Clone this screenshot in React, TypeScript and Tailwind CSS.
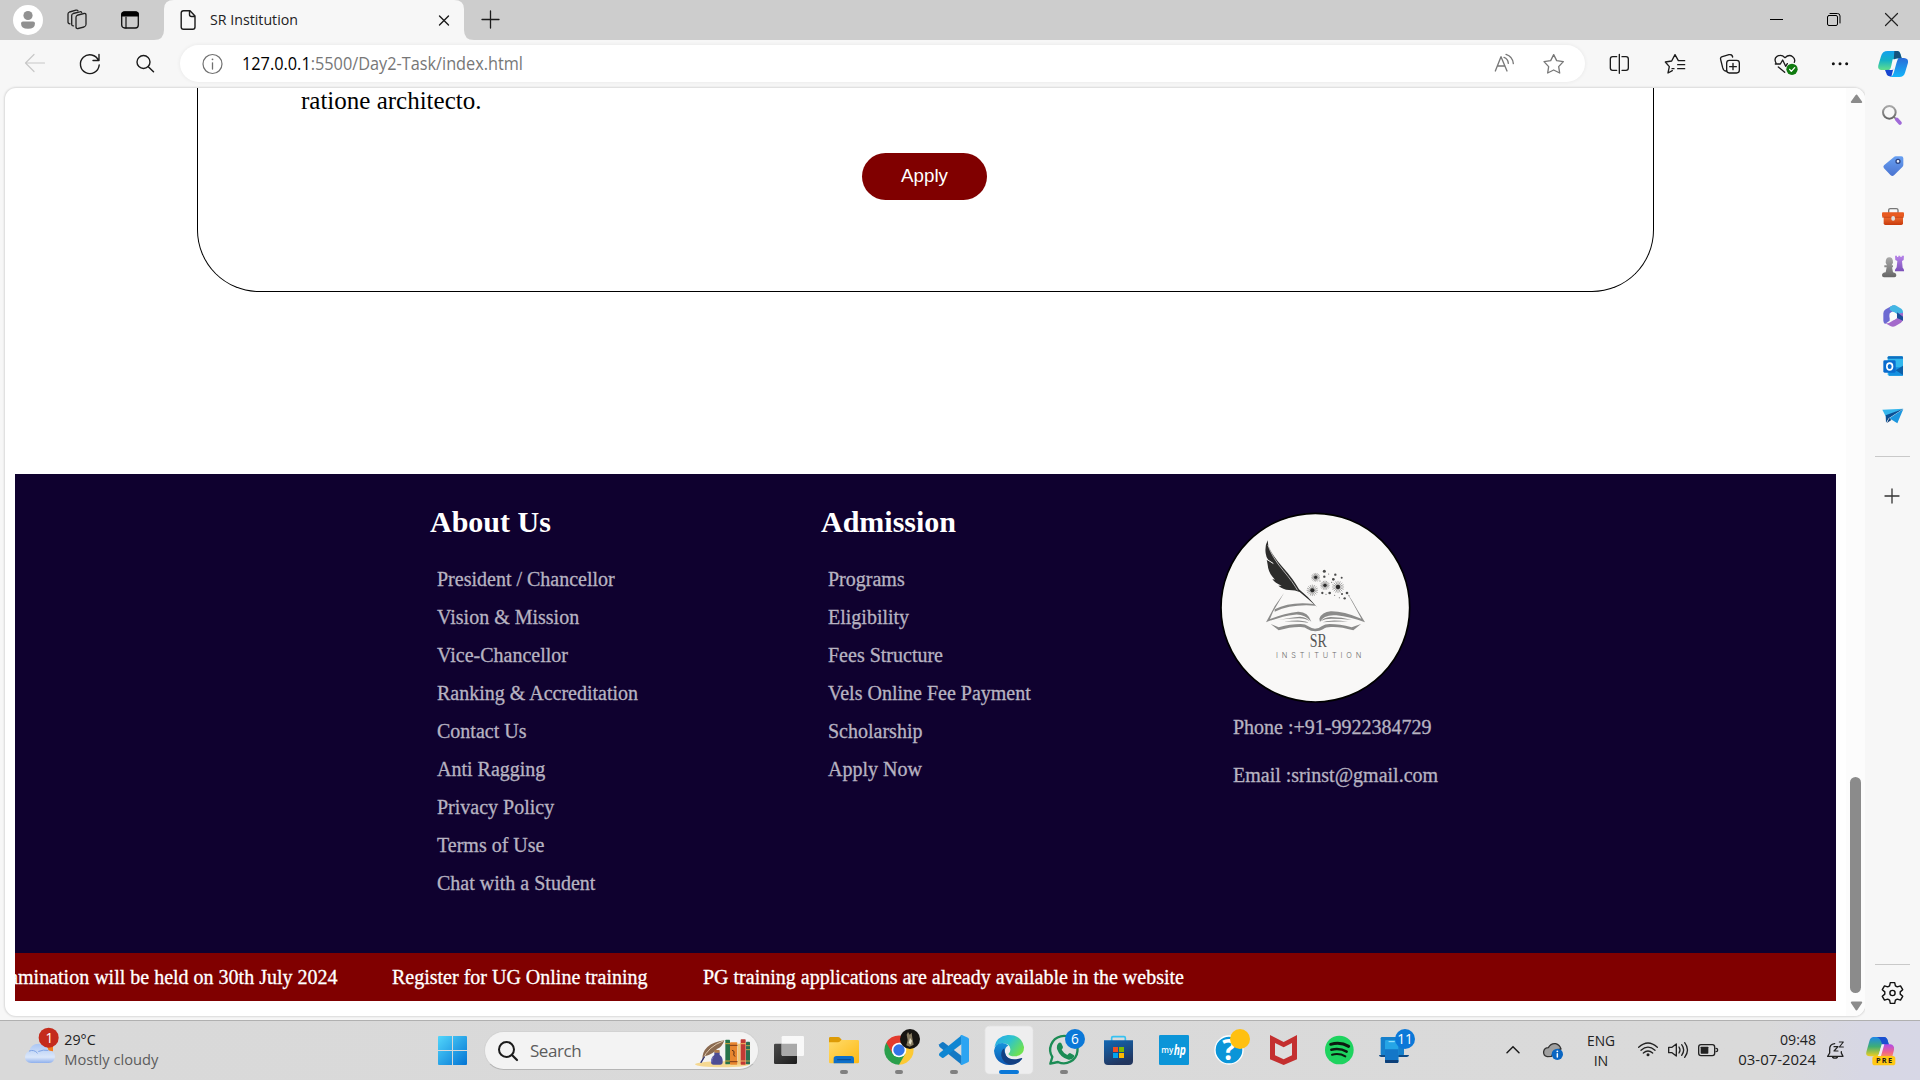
import React from "react";

type Vb = { w: number; h: number; vb?: string; className?: string; children: React.ReactNode };

function Svg({ w, h, vb, className, children }: Vb) {
  return (
    <svg
      width={w}
      height={h}
      viewBox={vb ?? `0 0 ${w} ${h}`}
      fill="none"
      strokeLinecap="round"
      strokeLinejoin="round"
      className={className ?? "block shrink-0"}
    >
      {children}
    </svg>
  );
}

const ui = "font-['Open_Sans','Noto_Sans',sans-serif]";
const serif = "font-['Liberation_Serif',serif]";
const sans = "'Open Sans','Noto Sans',sans-serif";

function TabStrip() {
  return (
    <div className="flex h-10 w-full items-stretch bg-[#cdcdcd]">
      <div className="flex w-[154px] items-center pl-[13px]">
        <Svg w={30} h={30}>
          <circle cx="15" cy="15" r="15" fill="#fff" />
          <circle cx="15" cy="10.500" r="4.600" fill="#919191" />
          <path d="M10 16.500h10q2 0 2 2 0 5.300-7 5.300t-7-5.300q0-2 2-2z" fill="#919191" />
        </Svg>
        <Svg w={24} h={24} className="ml-[22px] block">
          <g stroke="#222" strokeWidth="1.300">
            <rect x="0" y="0" width="10" height="13.500" rx="2" transform="translate(11 7.500) skewY(-14)" />
            <path d="M8.500 17.800c-1 .2-1.800-.5-1.800-1.500V7.500c0-1 .6-1.700 1.500-2l6.500-1.700c1-.3 1.700.1 2 .8" />
            <path d="M5 15.800c-1.200 0-2-.7-2-1.700V6c0-1 .6-1.700 1.500-2L11 2.200c.9-.2 1.600 0 2 .6" />
          </g>
        </Svg>
        <Svg w={20} h={20} className="ml-[31px] block">
          <rect x="1.700" y="2" width="16.600" height="16" rx="3" stroke="#111" strokeWidth="1.300" />
          <path d="M1.200 6.500V4.200Q1.200 1.400 4 1.400h12q2.800 0 2.800 2.800v2.300z" fill="#000" />
          <path d="M6 7v11" stroke="#111" strokeWidth="1.200" />
        </Svg>
      </div>
      <Svg w={320} h={40}>
        <path d="M0 40Q10 40 10 30V9Q10 0 20 0H300Q310 0 310 9V30Q310 40 320 40Z" fill="#f7f7f7" />
        <g stroke="#1b1b1b" strokeWidth="1.400">
          <path d="M29.500 10.700h6.500l5 5.300v11q0 2.300-2.300 2.300h-9.200q-2.300 0-2.300-2.300V13q0-2.300 2.300-2.300zM35.500 11v3.500q0 2 2 2H41" />
          <path d="M285.500 16l9 9m0-9l-9 9" />
        </g>
        <text x="56" y="24.800" fontFamily={sans} fontSize="14.500" fill="#222" textLength="88" lengthAdjust="spacingAndGlyphs">
          SR Institution
        </text>
      </Svg>
      <Svg w={32} h={40}>
        <path d="M8 19.500h17M16.500 11v17" stroke="#1b1b1b" strokeWidth="1.300" />
      </Svg>
      <div className="ml-auto flex">
        <Svg w={57} h={40}>
          <path d="M22 19.500h13" stroke="#000" strokeLinecap="butt" />
        </Svg>
        <Svg w={57} h={40}>
          <rect x="22.500" y="15.500" width="10" height="10" rx="1.500" stroke="#000" />
          <path d="M25 13.500h7.500q2.500 0 2.500 2.500v7" stroke="#000" />
        </Svg>
        <Svg w={58} h={40}>
          <path d="M23.500 13.500l12 12m0-12l-12 12" stroke="#222" strokeWidth="1.200" />
        </Svg>
      </div>
    </div>
  );
}

function Toolbar() {
  return (
    <div className="flex h-12 w-full items-center bg-[#f7f7f7]">
      <Svg w={180} h={48}>
        <path d="M44.500 23H25.500m8.500-8.500L25.500 23l8.500 8.500" stroke="#c8c8c8" strokeWidth="1.200" />
        <path d="M98.500 20.500A9.400 9.400 0 1 0 99.200 25M99 14.500v6h-6" stroke="#1b1b1b" strokeWidth="1.400" />
        <circle cx="143.500" cy="22" r="6.500" stroke="#1b1b1b" strokeWidth="1.400" />
        <path d="M148.300 26.800l5.200 5" stroke="#1b1b1b" strokeWidth="1.500" />
      </Svg>
      <div className="mb-[1px] flex h-[37px] w-[1405px] items-center rounded-full bg-white shadow-[0_0_4px_rgba(0,0,0,0.07)]">
        <Svg w={62} h={37}>
          <circle cx="32.500" cy="19" r="9.500" stroke="#707070" strokeWidth="1.200" />
          <path d="M32.500 17.800v6.200" stroke="#707070" strokeWidth="1.300" />
          <circle cx="32.500" cy="14.300" r=".9" fill="#707070" />
        </Svg>
        <Svg w={290} h={37}>
          <text x="0" y="25" fontFamily={sans} fontSize="17.300" fill="#777" textLength="281" lengthAdjust="spacingAndGlyphs">
            <tspan fill="#000">127.0.0.1</tspan>:5500/Day2-Task/index.html
          </text>
        </Svg>
        <Svg w={100} h={37} vb="135 135 300 111" className="ml-auto block">
          <g stroke="#777" strokeWidth="4">
            <path d="M166 213l17-43 18 43M172 198h23M192 172q12 4 13 18M198 163q20 6 22 28" />
            <path d="M341 164l9 18 20 3-14 15 3 19-18-9-18 9 3-19-14-15 20-3z" />
          </g>
        </Svg>
      </div>
      <Svg w={335} h={48} vb="435 120 1005 144">
        <g stroke="#1b1b1b" strokeWidth="4">
          <path d="M530 170h-12q-7 0-7 7v27q0 7 7 7h12M546 170h12q7 0 7 7v27q0 7-7 7h-12M538 163v57" />
          <path d="M697 212l-13 7 4-19-12-14 19-3 10-19 10 18h19M713 194h21M713 206h21M702 206h-6" />
          <path d="M860 213h-4q-5 0-8-10l-6-24q-2-7 5-9l20-6q9-2 11 7" />
          <rect x="860" y="181" width="38" height="38" rx="8" />
          <path d="M879 190v19M869 200h20" />
          <path d="M1008 189q-7-14 3-20 13-7 24 4 12-11 23-3 9 7 5 17M1006 192h15l7-12 9 19 5-8M1015 201l19 16" />
        </g>
        <circle cx="1056" cy="208" r="17" fill="#0f7b0f" />
        <path d="M1049 208l5 6 10-11" stroke="#fff" strokeWidth="4" />
        <g fill="#111">
          <circle cx="1180" cy="191" r="4.500" />
          <circle cx="1200" cy="191" r="4.500" />
          <circle cx="1220" cy="191" r="4.500" />
        </g>
        <defs>
          <linearGradient id="cpA" x1="0" y1="0" x2="0" y2="1">
            <stop offset="0" stopColor="#13a0ee" />
            <stop offset=".5" stopColor="#16b2c5" />
            <stop offset="1" stopColor="#62e08b" />
          </linearGradient>
          <linearGradient id="cpB" x1="0" y1="0" x2="0" y2="1">
            <stop offset="0" stopColor="#2a6cd8" />
            <stop offset="1" stopColor="#14b5fa" />
          </linearGradient>
        </defs>
        <path d="M1343 153h29q7 0 9 8l4 13-20 2-14 34h-28q-11-1-8-14l8-27q4-16 20-16z" fill="url(#cpA)" />
        <path d="M1363 153h10q6 0 8 8l4 14h-14q-7 0-10 8z" fill="#16527c" />
        <path d="M1335 210l17-1 8-3-6 24q-13 0-15-10z" fill="#1746d0" />
        <path d="M1376 174h16q14 1 12 14l-9 30q-4 13-17 13h-28q8-2 11-12l9-32q3-11 6-13z" fill="url(#cpB)" />
        <path d="M1358 178h10l-10 32h-11q4 0 6-9z" fill="#f7f7f7" />
      </Svg>
    </div>
  );
}

const about = [
  "President / Chancellor",
  "Vision & Mission",
  "Vice-Chancellor",
  "Ranking & Accreditation",
  "Contact Us",
  "Anti Ragging",
  "Privacy Policy",
  "Terms of Use",
  "Chat with a Student",
];
const admission = ["Programs", "Eligibility", "Fees Structure", "Vels Online Fee Payment", "Scholarship", "Apply Now"];

function LinkColumn({ title, items }: { title: string; items: string[] }) {
  return (
    <div className="w-[391px]">
      <h2 className="text-[30px] leading-[34px] font-bold text-white">{title}</h2>
      <ul className="mt-[20.5px] ml-[7px] text-[20px] leading-[38px] text-[#b7b3c1] [-webkit-text-stroke:0.3px_#b7b3c1]">
        {items.map((t) => (
          <li key={t}>{t}</li>
        ))}
      </ul>
    </div>
  );
}

const bursts: [number, number, number][] = [
  [347, 261, 12],
  [375, 285, 13],
  [337, 300, 16],
  [414, 290, 17],
];
const dots: [number, number, number][] = [
  [373, 243, 4.5], [406, 253, 3.5], [425, 262, 3], [373, 259, 3.5], [400, 267, 4], [367, 308, 3.5],
  [389, 308, 4], [441, 308, 4], [434, 324, 3.5], [426, 311, 3], [386, 251, 1.5], [395, 276, 1.5],
  [360, 272, 1.5], [418, 322, 1.5], [404, 315, 1.5], [378, 312, 1.5], [447, 316, 1.5],
];
const angles = [0, 22.5, 45, 67.5, 90, 112.5, 135, 157.5];

function InstitutionLogo() {
  return (
    <Svg w={191} h={191} vb="60 65 573 573">
      <circle cx="346" cy="352" r="283" fill="#f9f8f7" stroke="#000" strokeWidth="5" />
      <path d="M203 150q0 14 6 25 10 22 38 54 34 38 50 68 28 22 54 53-26-24-52-45-12-6-32-6-18-1-32-13l10 0q-20-8-28-20l8 2q-20-20-22-45-1-7-3-15l6 3q-8-10-9-22-3-22 6-39z" fill="#2c2c2b" />
      <path d="M204 165q12 36 46 76 30 36 42 58" stroke="#f9f8f7" strokeWidth="2" />
      <path d="M199 206l20 13" stroke="#f9f8f7" strokeWidth="3" />
      {bursts.map(([x, y, r], i) => (
        <g key={i} transform={`translate(${x} ${y})`} stroke="#444" strokeWidth="1.200">
          {angles.map((a) => (
            <path key={a} d={`M${-r} 0H${r}`} transform={`rotate(${a})`} />
          ))}
          <circle r={r * 0.38} fill="#2a2a2a" stroke="none" />
        </g>
      ))}
      {dots.map(([x, y, r], i) => (
        <circle key={i} cx={x} cy={y} r={r} fill="#4a4a4a" />
      ))}
      <g fill="#8b8b8a">
        <path d="M252 308l-33 56-9 22q45-18 84-22 30-1 40 30-22-24-50-21-38 4-86 23l26-48z" />
        <path d="M224 357q46-24 118-16l4 5q-70-6-122 18z" />
        <path d="M440 306q18 26 32 52l23 38q-44-16-86-21-38-3-49 20l-2-10q8-20 34-22 36-1 92 22l-22-40z" />
        <path d="M232 389q40-8 68-10 22 2 29 14-12-9-32-9-28 0-65 5z" />
        <path d="M252 394q30-4 50-3 16 1 26 6-36-4-76-3z" />
        <path d="M456 389q-30-9-64-9-20 2-30 12 14-7 32-7 30 0 62 4z" />
        <path d="M444 394q-28-4-50-3-16 1-26 5 36-3 76-2z" />
        <path d="M212 401l24 10q35-10 66-10 14 0 23 7 10 7 20 7 12 0 20-7 10-7 24-7 30 0 66 10l28-10-23 19q-40-12-67-10-16 0-24 7-10 6-23 6-14 0-24-7-6-6-20-6-30-1-66 10z" />
      </g>
      <text x="329" y="469" fontFamily="'Liberation Serif',serif" fontSize="55" fill="#555" textLength="51" lengthAdjust="spacingAndGlyphs">
        SR
      </text>
      <text x="228" y="502" fontFamily="Inter,sans-serif" fontSize="22" fontWeight="300" fill="#6a6a6a" textLength="256">
        INSTITUTION
      </text>
    </Svg>
  );
}

function Page() {
  return (
    <div className={`flex min-w-0 flex-1 flex-col pr-[10px] pl-[10px] ${serif}`}>
      <section className="ml-[182px] flex h-[204px] w-[1457px] flex-col rounded-b-[62px] border border-t-0 border-black">
        <p className="pl-[103px] text-[25px] leading-[26px] text-black">ratione architecto.</p>
        <button className="mt-[39px] ml-[664px] h-[47px] w-[125px] rounded-full bg-[#800000] font-['Liberation_Sans',sans-serif] text-[18.75px] text-white">
          Apply
        </button>
      </section>
      <footer className="mt-[182px] flex h-[479px] w-[1821px] bg-[#0f012f] pt-[31px] pl-[415px]">
        <LinkColumn title="About Us" items={about} />
        <LinkColumn title="Admission" items={admission} />
        <div className="mt-[7px] ml-[8px] w-[240px]">
          <InstitutionLogo />
          <div className="pl-[13px] text-[20px] leading-[48px] whitespace-nowrap text-[#b7b3c1] [-webkit-text-stroke:0.3px_#b7b3c1]">
            <p>Phone :+91-9922384729</p>
            <p>Email :srinst@gmail.com</p>
          </div>
        </div>
      </footer>
      <div className="flex h-12 w-[1821px] overflow-hidden bg-[#800000] text-[20px] leading-[48px] whitespace-nowrap text-white [-webkit-text-stroke:0.3px_white]">
        <div className="flex w-[322.5px] shrink-0 justify-end">
          <span>Entrance Examination will be held on 30th July 2024</span>
        </div>
        <span className="w-[311px] shrink-0 pl-[54.5px]">Register for UG Online training</span>
        <span className="pl-[54.5px]">PG training applications are already available in the website</span>
      </div>
    </div>
  );
}

function Scrollbar() {
  return (
    <div className="flex w-[19px] flex-col items-center bg-[#fcfcfc]">
      <Svg w={14} h={17}>
        <path d="M7.500 7.500L12.200 14H2.800z" fill="#8b8b8b" stroke="#8b8b8b" strokeWidth="2" />
      </Svg>
      <div className="mt-[672px] h-[216px] w-[11px] rounded-full bg-[#8b8b8b]" />
      <Svg w={14} h={20}>
        <path d="M7.500 16.500L2.800 9.500h9.400z" fill="#8b8b8b" stroke="#8b8b8b" strokeWidth="2" />
      </Svg>
    </div>
  );
}

function Sidebar() {
  return (
    <aside className="flex w-[55px] flex-col bg-[#f7f7f7] pt-[2px]">
      <Svg w={55} h={350} vb="135 30 165 1050">
        <defs>
          <linearGradient id="sg" x1="0" y1="0" x2="0" y2="1"><stop stopColor="#a9a9a9" /><stop offset="1" stopColor="#666" /></linearGradient>
          <linearGradient id="sp" x1="0" y1="0" x2="0" y2="1"><stop stopColor="#b884ea" /><stop offset="1" stopColor="#7a50b8" /></linearGradient>
          <linearGradient id="sb" x1="0" y1="0" x2="0" y2="1"><stop stopColor="#68a0f2" /><stop offset="1" stopColor="#4a73d0" /></linearGradient>
          <linearGradient id="so" x1="0" y1="0" x2="0" y2="1"><stop stopColor="#ee6c30" /><stop offset="1" stopColor="#c83a0c" /></linearGradient>
        </defs>
        <circle cx="208" cy="97" r="19" stroke="url(#sg)" strokeWidth="6" />
        <path d="M222 111l6 6" stroke="#777" strokeWidth="5" />
        <path d="M230 118l10 11" stroke="#a06ad8" strokeWidth="11" />
        <path d="M222 231q2-2 5-2h17q6 0 6 6v19q0 4-3 7l-25 25q-5 4-10 0l-20-21q-4-5 0-9z" fill="url(#sb)" />
        <circle cx="234" cy="244" r="6" fill="#e8f0ff" stroke="#2d4480" strokeWidth="4" />
        <path d="M206 398v-8q0-4 5-4h18q5 0 5 4v8" stroke="#777" strokeWidth="4" />
        <path d="M191 411h58v19q0 5-5 5h-48q-5 0-5-5z" fill="url(#so)" />
        <rect x="186" y="397" width="66" height="14" rx="3" fill="#e85a20" />
        <path d="M188 412h62" stroke="#b93a10" strokeWidth="2" />
        <rect x="214" y="408" width="11" height="14" rx="5" fill="#ddd" />
        <g fill="url(#sg)">
          <path d="M197 548q0-16 11-16t11 16l-4 8h4v6h-3l3 15q10 2 10 9 0 6-6 6h-31q-6 0-6-6 0-8 11-9l3-15h-7v-6h8z" />
        </g>
        <path d="M225 527h6v4h4v-4h6v4h4v-4h7l-1 13-5 3 2 20q4 3 4 8v3h-27v-5l5-7 2-19-6-3z" fill="url(#sp)" />
        <path d="M219 676l-22 12q-7 4-7 12v22q0 6 5 10l14-10v-22l22-14z" fill="#6d6ad2" />
        <path d="M219 676q5-2 10 1l15 9q5 4 5 10v26l-18-8v-12l-22-12 1-10z" fill="#43b6e4" />
        <path d="M249 698v18q0 8-6 12l-18 11q-7 3-14-1l-16-9q6 2 13-1l24-14-1-12z" fill="#a46acb" />
        <path d="M231 697l18 13v12l-18-8z" fill="#1d4d9a" />
        <circle cx="219.500" cy="708" r="11" fill="#fbfbfb" />
        <rect x="203" y="829" width="46" height="58" rx="4" fill="#32b8ee" />
        <path d="M203 836v-4q0-3 4-3h38q4 0 4 3v4z" fill="#0f6fc0" />
        <path d="M204 862h45v25h-42z" fill="#1590e0" />
        <path d="M249 857v28l-22-14z" fill="#0d5fa8" />
        <rect x="190" y="841" width="37" height="37" rx="4" fill="#0a6cce" />
        <ellipse cx="209" cy="859.500" rx="8.500" ry="10" stroke="#fff" strokeWidth="5" />
        <path d="M187 989l63-3-53 23z" fill="#35b6ec" />
        <path d="M250 986l-44 29-8 13-1-22z" fill="#0b4f93" />
        <path d="M250 987l-18 43-24-15z" fill="#1b96de" />
        <path d="M208 1014l6 6-13 9z" fill="#0d3f7a" />
      </Svg>
      <div className="mt-[16px] ml-[10px] h-px w-[35px] bg-[#c9c9c9]" />
      <Svg w={54} h={79}>
        <path d="M20 39h14M27 32v14" stroke="#333" strokeWidth="1.300" />
      </Svg>
      <div className="mt-auto ml-[10px] h-px w-[35px] bg-[#c9c9c9]" />
      <Svg w={55} h={55}>
        <g stroke="#111" strokeWidth="1.400" transform="translate(.5 -.6)">
          <path d="M24.800 18.200h4.400l.7 3.200 1.900 1.100 3.200-1 2.200 3.800-2.500 2.200v2.200l2.500 2.200-2.200 3.800-3.200-1-1.900 1.100-.7 3.200h-4.400l-.7-3.200-1.900-1.100-3.200 1-2.200-3.800 2.500-2.200v-2.200l-2.500-2.200 2.200-3.800 3.200 1 1.900-1.100z" />
          <circle cx="27" cy="28.600" r="2.600" />
        </g>
      </Svg>
    </aside>
  );
}

function Badge({ x, y, n }: { x: number; y: number; n: string }) {
  return (
    <g>
      <circle cx={x} cy={y} r="30" fill="#0b78d8" />
      <text x={x} y={y + 15} fontFamily={sans} fontSize="41" fill="#fff" textAnchor="middle">
        {n}
      </text>
    </g>
  );
}

function AppIcons() {
  return (
    <div className="flex">
      <Svg w={55} h={60} vb="1026 30 165 180">
        <defs>
          <linearGradient id="tv" x1="0" y1="0" x2="1" y2="1"><stop stopColor="#4b4b4b" /><stop offset="1" stopColor="#1c1c1c" /></linearGradient>
        </defs>
        <rect x="1062" y="101" width="69" height="61" rx="4" fill="url(#tv)" />
        <rect x="1085" y="78" width="67" height="60" rx="4" fill="#f8f8f8" />
        <path d="M1085 101h46v37h-42q-4 0-4-4z" fill="#a9a9a9" />
      </Svg>
      <Svg w={55} h={60} vb="1191 30 165 180">
        <defs>
          <linearGradient id="fe" x1="0" y1="0" x2="1" y2="1"><stop stopColor="#ffdb6b" /><stop offset="1" stopColor="#fdb913" /></linearGradient>
        </defs>
        <path d="M1227 85q0-4 4-4h23q4 0 7 4l5 6v10h-39z" fill="#dd9b06" />
        <path d="M1227 97h27q4 0 7-4l3-3h49q4 0 4 4v62q0 4-4 4h-82q-4 0-4-4z" fill="url(#fe)" />
        <path d="M1241 160v-14q0-8 8-8h45q8 0 8 8v14z" fill="#0e6fc9" />
        <path d="M1253 149h38" stroke="#0a4f96" strokeWidth="4" />
        <rect x="1260" y="180" width="24" height="12" rx="6" fill="#808080" />
      </Svg>
      <Svg w={55} h={60} vb="1356 30 165 180">
        <path d="M1437 120L1475 98A44 44 0 0 1 1437 164z" fill="#fcc934" />
        <path d="M1437 120L1456 131 1437 164A44 44 0 0 1 1398.900 98z" fill="#2a9f4c" />
        <path d="M1437 98h38a44 44 0 0 0-76 0l19 33z" fill="#e33b2e" />
        <circle cx="1437" cy="120" r="22" fill="#fff" />
        <circle cx="1437" cy="120" r="17" fill="#3374e8" />
        <circle cx="1470" cy="87" r="30" fill="#171512" />
        <path d="M1460 74l4-8 5 8 6-6 2 16 4 20-12 6-10-4 4-16z" fill="#857a60" />
        <path d="M1470 84l6 8-4 12-6-6z" fill="#e0dac2" />
        <rect x="1425" y="180" width="24" height="12" rx="6" fill="#808080" />
      </Svg>
      <Svg w={55} h={60} vb="-9 30 165 180">
        <path d="M28 103l8-6q3-2 7 1l52 40v26L29 111q-4-4-1-8z" fill="#1479c4" />
        <path d="M28 137l8 6q3 2 7-1l52-40V76L29 129q-4 4-1 8z" fill="#0f86d2" />
        <path d="M90 76q3-2 6-1l18 8q3 2 3 5v64q0 3-3 5l-18 8q-4 1-6-2 4 1 4-4V81q0-5-4-5z" fill="#2ba4f2" />
        <rect x="60" y="180" width="24" height="12" rx="6" fill="#808080" />
      </Svg>
      <Svg w={55} h={60} vb="156 30 165 180">
        <defs>
          <linearGradient id="eg" x1="0" y1="0" x2="1" y2=".6"><stop stopColor="#2aa5ec" /><stop offset=".5" stopColor="#2dc3cf" /><stop offset="1" stopColor="#6fe24f" /></linearGradient>
          <linearGradient id="eb" x1="0" y1="0" x2="0" y2="1"><stop stopColor="#1593dc" /><stop offset="1" stopColor="#0d55b0" /></linearGradient>
        </defs>
        <rect x="165" y="48" width="144" height="144" rx="13" fill="#eeeeef" stroke="#e3e3e3" strokeWidth="2" />
        <path d="M193 111q6-32 40-36 42-2 49 36 1 25-25 28-18 1-22-7 7-5 6-15-2-16-22-17-16 0-26 11z" fill="url(#eg)" />
        <path d="M192 122q2-22 25-23 12 0 18 8-12 5-10 20 4 26 36 24 8-1 15-5-12 18-38 19-42-3-46-43z" fill="url(#eb)" />
        <path d="M223 115q-11 7-9 23 4 21 28 26 22-1 34-17 2-3-1-3-36 11-48-9-5-10-4-20z" fill="#123f82" />
        <rect x="207" y="180" width="60" height="12" rx="6" fill="#0b78d8" />
      </Svg>
      <Svg w={55} h={60} vb="321 30 165 180">
        <path d="M361 161l6-20A41 41 0 1 1 384 156z" stroke="#1c8c55" strokeWidth="7" fill="#dcdcdc" />
        <path d="M386 99q5-3 8 1l5 11q0 4-4 8 6 11 17 16 5-6 8-6l11 6q3 2 1 6-5 9-16 8-25-5-35-32-2-12 5-18z" fill="#1c8c55" />
        <Badge x={435} y={87} n="6" />
        <rect x="390" y="180" width="24" height="12" rx="6" fill="#808080" />
      </Svg>
      <Svg w={55} h={60} vb="486 30 165 180">
        <defs>
          <linearGradient id="ms" x1="0" y1="0" x2=".4" y2="1"><stop stopColor="#1268b4" /><stop offset="1" stopColor="#22365f" /></linearGradient>
        </defs>
        <path d="M545 95V84q0-4 4-4h33q4 0 4 4v11" stroke="#35c1f1" strokeWidth="5" />
        <path d="M522 91h87v62q0 12-12 12h-63q-12 0-12-12z" fill="url(#ms)" />
        <path d="M549 111h15v15h-15z" fill="#f25022" />
        <path d="M567 111h15v15h-15z" fill="#7fba00" />
        <path d="M549 129h15v15h-15z" fill="#00a4ef" />
        <path d="M567 129h15v15h-15z" fill="#ffb900" />
      </Svg>
      <Svg w={55} h={60} vb="651 30 165 180">
        <rect x="687" y="75" width="90" height="90" rx="4" fill="#0b95d8" />
        <text x="694" y="129" fontFamily={sans} fontSize="29" fontWeight="600" fill="#fff" textLength="36" lengthAdjust="spacingAndGlyphs">my</text>
        <text x="731" y="134" fontFamily={sans} fontSize="40" fontWeight="700" fontStyle="italic" fill="#fff" textLength="37" lengthAdjust="spacingAndGlyphs">hp</text>
      </Svg>
      <Svg w={55} h={60} vb="816 30 165 180">
        <circle cx="897" cy="120" r="42" fill="#0b95d8" stroke="#fff" strokeWidth="4" />
        <text x="897" y="149" fontFamily={sans} fontSize="86" fontWeight="700" fill="#fff" textAnchor="middle">?</text>
        <circle cx="930" cy="87" r="30" fill="#ffc010" />
      </Svg>
      <Svg w={55} h={60} vb="981 30 165 180">
        <path d="M1020 75l41 21 40-21v73l-40 17-41-17z" fill="#c42f2f" />
        <path d="M1035 99l26 13 25-13v37l-25 12-26-12z" fill="#dedede" />
      </Svg>
      <Svg w={55} h={60} vb="1146 30 165 180">
        <circle cx="1228" cy="120" r="43" fill="#1ed35f" />
        <g stroke="#0c1a10" strokeWidth="9">
          <path d="M1202 103q30-8 54 6" />
          <path d="M1204 119q26-6 46 6" strokeWidth="7.500" />
          <path d="M1206 134q23-5 40 5" strokeWidth="6" />
        </g>
      </Svg>
      <Svg w={55} h={60} vb="1311 30 165 180">
        <rect x="1352" y="81" width="70" height="55" rx="4" fill="#1580cc" />
        <path d="M1347 135h90q0 5-6 6h-78q-6-1-6-6z" fill="#0c4a86" />
        <rect x="1365" y="90" width="40" height="69" rx="4" fill="#25a5e6" />
        <path d="M1365 118h40v37q0 4-4 4h-32q-4 0-4-4z" fill="#1377c8" />
        <path d="M1365 150h40v5q0 4-4 4h-32q-4 0-4-4z" fill="#0c3f78" />
        <path d="M1377 95h16" stroke="#a6e8ff" strokeWidth="3" />
        <Badge x={1425} y={87} n="11" />
      </Svg>
    </div>
  );
}

function SearchArt() {
  return (
    <Svg w={60} h={36} vb="820 66 180 108">
      <ellipse cx="908" cy="160" rx="82" ry="9" fill="#f5d892" />
      <path d="M848 148q-2-50 66-60-6 20-22 26-12 16-36 22l-8 14z" fill="#8a6a50" />
      <path d="M850 144q14-36 60-54" stroke="#f0dcc0" strokeWidth="2.500" />
      <path d="M844 154l10-16" stroke="#2b3170" strokeWidth="4" />
      <path d="M884 132v-8h16v8q10 6 9 22 0 7-8 7h-19q-8 0-8-7 0-16 10-22z" fill="#4d4c94" />
      <path d="M880 138q-5 8-4 15" stroke="#7d7cc0" strokeWidth="3" />
      <rect x="884" y="117" width="16" height="8" rx="2" fill="#b07a4a" />
      <rect x="917" y="86" width="14" height="74" rx="2" fill="#27734a" />
      <path d="M917 98h14M917 150h14" stroke="#d8a63c" strokeWidth="3" />
      <rect x="931" y="94" width="22" height="67" rx="2" fill="#e8862f" />
      <path d="M931 103h22M931 152h22" stroke="#7c3b18" strokeWidth="3" />
      <path d="M938 118q8 2 5 8t2 10" stroke="#5a2d12" strokeWidth="3" />
      <rect x="954" y="98" width="9" height="62" fill="#f0c878" />
      <rect x="963" y="85" width="15" height="76" rx="2" fill="#c23a34" />
      <path d="M963 98h15M963 150h15" stroke="#f0b860" strokeWidth="3" />
      <rect x="979" y="92" width="12" height="68" rx="2" fill="#2c6e50" />
      <path d="M980 104h10M980 116h10M980 150h10" stroke="#d9b24c" strokeWidth="2.500" />
    </Svg>
  );
}

function Tray() {
  return (
    <Svg w={440} h={59} vb="120 243 1320 177">
      <defs>
        <linearGradient id="ca" x1="0" y1="0" x2="0" y2="1"><stop stopColor="#1e88e8" /><stop offset=".5" stopColor="#3fae74" /><stop offset="1" stopColor="#f0cf20" /></linearGradient>
        <linearGradient id="cb" x1="0" y1="0" x2="0" y2="1"><stop stopColor="#b04be8" /><stop offset=".6" stopColor="#f0638a" /><stop offset="1" stopColor="#f99c50" /></linearGradient>
      </defs>
      <path d="M201 338l18-18 18 18" stroke="#1b1b1b" strokeWidth="4.500" />
      <path d="M322 350q-13-3-11-16 3-11 14-11 8-14 22-12 12 3 16 16-20 2-28 22z" fill="#a0a0a0" stroke="#333" strokeWidth="4" />
      <circle cx="352" cy="343" r="17" fill="#0a66c2" />
      <path d="M352 341v10" stroke="#fff" strokeWidth="4.500" />
      <circle cx="352" cy="334" r="2.800" fill="#fff" />
      <g fontFamily={sans} fontSize="43" fill="#222">
        <text x="441" y="317" textLength="84" lengthAdjust="spacingAndGlyphs">ENG</text>
        <text x="461" y="377" textLength="44" lengthAdjust="spacingAndGlyphs">IN</text>
        <text x="1020" y="315" textLength="108" lengthAdjust="spacingAndGlyphs">09:48</text>
        <text x="895" y="375" textLength="233" lengthAdjust="spacingAndGlyphs">03-07-2024</text>
      </g>
      <g stroke="#222" strokeWidth="4">
        <path d="M596 322q28-26 56 0M603 331q21-19 42 0M610 339q14-12 28 0" />
        <path d="M686 322h10l13-10v36l-13-10h-10zM717 321q6 9 0 18M725 314q12 16 0 32M734 308q17 22 0 44" />
        <rect x="776" y="314" width="48" height="33" rx="7" />
        <path d="M828 325q5 0 5 5t-5 5" />
        <path d="M1184 311q-16 2-15 18v10l-6 10h46l-5-10v-4M1178 352q7 5 14 0" />
        <path d="M1182 320h12l-12 13h12M1198 306h12l-12 15h12" strokeWidth="3.500" />
      </g>
      <circle cx="624" cy="344" r="4.500" fill="#222" />
      <rect x="782" y="320" width="23" height="21" rx="2" fill="#222" />
      <path d="M1300 291h32q9 0 12 14l3 10h-16q-6 0-9 10l-6 20q-2 4-7 4h-19q-14 0-11-13l9-32q3-12 11-13z" fill="url(#ca)" />
      <path d="M1310 291h22q9 0 12 14l3 10h-20q-6-22-17-24z" fill="#1b4fd0" />
      <path d="M1331 313h20q13 2 11 16l-6 24h-42q6-4 8-12z" fill="url(#cb)" />
      <path d="M1325 313h8l-10 35h-10q3-3 5-10z" fill="#eeeef5" />
      <rect x="1297" y="348" width="69" height="28" rx="8" fill="#ffc814" />
      <text x="1308" y="370" fontFamily={sans} fontSize="22" fontWeight="700" fill="#1b1b1b" textLength="48">PRE</text>
    </Svg>
  );
}

function Taskbar() {
  return (
    <div className="flex h-[60px] w-full border-t border-[#b0b0b0] bg-[linear-gradient(90deg,#d9d9d9_0%,#dadada_92%,#d7d7e4_97%,#d7d7e6_100%)]">
      <div className="w-[428px]">
        <Svg w={170} h={59} vb="0 243 510 177">
          <defs>
            <linearGradient id="cl" x1="0" y1="0" x2="0" y2="1"><stop stopColor="#aac6f4" /><stop offset=".7" stopColor="#dbe7fa" /><stop offset="1" stopColor="#8fb0ec" /></linearGradient>
          </defs>
          <path d="M140 318h19v16h-12z" fill="#f47a1c" />
          <path d="M88 333q4-21 28-22 24 2 28 20 22 2 21 20-2 17-18 18H94q-18-1-19-17 1-15 13-19z" fill="url(#cl)" />
          <path d="M88 333q14-6 24 6M116 334q14-6 28-3" stroke="#7fa4e6" strokeWidth="3" />
          <circle cx="146" cy="293" r="30" fill="#c42b1c" />
          <text x="148" y="308" fontFamily={sans} fontSize="41" fill="#fff" textAnchor="middle">1</text>
          <text x="193" y="315" fontFamily={sans} fontSize="43" fill="#222" textLength="94" lengthAdjust="spacingAndGlyphs">29°C</text>
          <text x="193" y="375" fontFamily={sans} fontSize="43" fill="#5c5c5c" textLength="282" lengthAdjust="spacingAndGlyphs">Mostly cloudy</text>
        </Svg>
      </div>
      <Svg w={56} h={59}>
        <defs>
          <linearGradient id="wl" gradientUnits="userSpaceOnUse" x1="10" y1="15" x2="39" y2="44"><stop stopColor="#52d6fb" /><stop offset="1" stopColor="#0374d4" /></linearGradient>
        </defs>
        <path d="M10 16q0-1 1-1h13v14H10zM25 15h13q1 0 1 1v13H25zM10 30h14v14H11q-1 0-1-1zM25 30h14v13q0 1-1 1H25z" fill="url(#wl)" />
      </Svg>
      <div className="mt-[10px] flex h-[39px] w-[275px] items-center rounded-full border border-[#d2d2d2] border-b-[#b5b5b5] bg-[#f3f3f3]">
        <Svg w={45} h={37}>
          <circle cx="21.500" cy="17.500" r="7.500" stroke="#1b1b1b" strokeWidth="2" />
          <path d="M27 23l5 5" stroke="#1b1b1b" strokeWidth="2.200" />
        </Svg>
        <span className={`w-[163px] pt-[1px] text-[17px] tracking-[-0.45px] text-[#5c5c5c] ${ui}`}>Search</span>
        <SearchArt />
      </div>
      <div className="-mt-[1px] ml-[3px]">
        <AppIcons />
      </div>
      <div className="ml-auto">
        <Tray />
      </div>
    </div>
  );
}

export default function App() {
  return (
    <div className="flex h-[1080px] w-[1920px] flex-col overflow-hidden bg-[#f7f7f7]">
      <TabStrip />
      <Toolbar />
      <div className="flex h-[932px] w-full">
        <div className="ml-[5px] flex h-[928px] w-[1860px] overflow-hidden rounded-[11px] bg-white shadow-[0_0_2px_1px_rgba(0,0,0,0.12)]">
          <Page />
          <Scrollbar />
        </div>
        <Sidebar />
      </div>
      <Taskbar />
    </div>
  );
}
